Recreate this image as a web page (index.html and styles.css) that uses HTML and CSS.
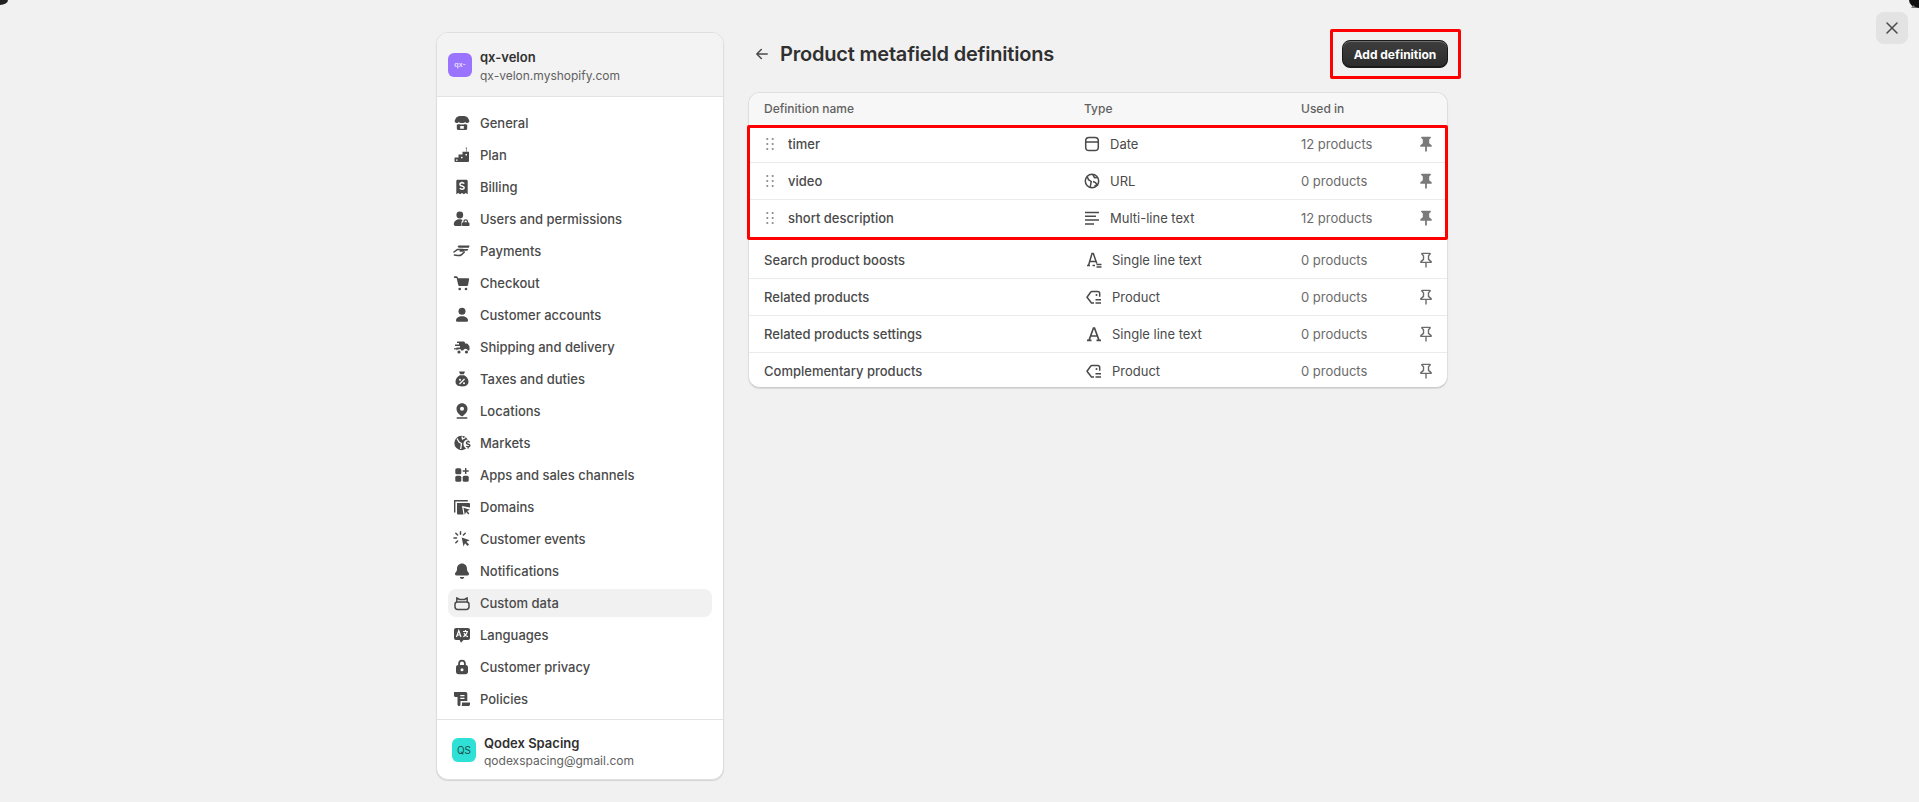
FILE: index.html
```html
<!DOCTYPE html>
<html lang="en">
<head>
    <meta charset="UTF-8">
    <meta name="viewport" content="width=device-width, initial-scale=1.0">
    <title>Product metafield definitions</title>
    <link rel="stylesheet" href="styles.css">
</head>
<body>

<svg class="icon-sprite" xmlns="http://www.w3.org/2000/svg">
    <symbol id="i-store" viewBox="0 0 20 20"><path d="M10 3c3.500 0 5.300.6 6.200 2.300l1.100 2.500c.3 1.300-.8 2.200-2 2.200-1 0-1.600-.4-2-1-.7.6-1.800 1-3.300 1s-2.600-.4-3.300-1c-.4.6-1 1-2 1-1.200 0-2.300-.9-2-2.200l1.100-2.500C4.700 3.600 6.500 3 10 3Z"/><path fill-rule="evenodd" d="M4.800 11.500c.8 0 1.500-.2 2.100-.6.800.4 1.900.6 3.100.6s2.300-.2 3.100-.6c.6.400 1.300.6 2.100.6v4c0 .9-.7 1.500-1.500 1.500H6.300c-.8 0-1.500-.6-1.500-1.500v-4Zm3.400 1.500v2.800h3.600V13H8.200Z"/></symbol>
    <symbol id="i-plan" viewBox="0 0 20 20"><path fill-rule="evenodd" d="M3 12.500h3.500V9.500h4V6.800h6.500V16a1 1 0 0 1-1 1H3.500a1 1 0 0 1-1-1v-2.800c0-.4.200-.7.500-.7Zm1 2v1.300h1.500v-1.300H4Zm5-2.800v1.500h1.500v-1.500H9Zm4.500-2.700v1.500H15V9h-1.500Z"/><path d="M13.500 3.400 14.300 2l.7 1.400h-.5v3.400h-.5V3.400Z"/></symbol>
    <symbol id="i-billing" viewBox="0 0 20 20"><path fill-rule="evenodd" d="M5.600 2.800h8.800c.7 0 1.300.6 1.300 1.300v13.100l-2-1.200-1.800 1.200-1.900-1.200-1.900 1.200-1.800-1.200-2 1.200V4.100c0-.7.600-1.300 1.300-1.300Z"/><path fill="none" stroke="#fff" stroke-width="1.400" d="M12.200 6.700c-.4-.6-1.200-.9-2.200-.9-1.200 0-2.100.6-2.100 1.600 0 2.200 4.300 1 4.300 3.200 0 1-1 1.600-2.200 1.600-1 0-1.800-.4-2.200-1M10 4.700v1.100m0 6.100V13"/></symbol>
    <symbol id="i-users" viewBox="0 0 20 20"><circle cx="7.800" cy="6" r="3.400"/><path d="M1.800 15.300c0-3 2.600-5 6-5 1.100 0 2.100.2 3 .6-.8.7-1.300 1.700-1.300 2.800v3.300H3.500c-1 0-1.700-.7-1.700-1.700Z"/><path fill-rule="evenodd" d="M11.300 13.200v-.6a2.400 2.400 0 0 1 4.800 0v.6c.9.100 1.400.7 1.400 1.500v1.300c0 .8-.6 1-1.300 1h-5c-.7 0-1.300-.2-1.300-1v-1.300c0-.8.500-1.400 1.400-1.500Zm1.300 0h2.200v-.6a1.100 1.100 0 0 0-2.200 0v.6Z"/></symbol>
    <symbol id="i-payments" viewBox="0 0 20 20"><path d="M5.500 5.300c.3-.6.900-.9 1.500-.9h10c.4 0 .7.600.4 1l-.6 1.300H6.700L5.500 5.300Z"/><path d="M8.300 8h8l-.8 1.800H9.700Z"/><path fill="none" stroke="currentColor" stroke-width="1.500" stroke-linecap="round" stroke-linejoin="round" d="M2 11l3.200-2.400h5.500c.8 0 1 1.400 0 1.500H8.200M2.400 14l3.200.5c1.700.3 3 0 4-.9l2.800-2.600"/></symbol>
    <symbol id="i-cart" viewBox="0 0 20 20"><path d="M2.700 3.200h1.400c.9 0 1.600.6 1.800 1.400l.1.600h10.300c.5 0 .9.500.8 1l-1 5.500c-.1.800-.8 1.300-1.600 1.300H7.800c-.8 0-1.500-.5-1.600-1.300L4.600 5H2.700a.9.900 0 0 1 0-1.800Z"/><circle cx="7.700" cy="16" r="1.300"/><circle cx="14" cy="16" r="1.300"/></symbol>
    <symbol id="i-user" viewBox="0 0 20 20"><circle cx="10" cy="6.200" r="3.500"/><path d="M4 15.400c0-2.500 2.500-4.200 6-4.200s6 1.700 6 4.200c0 .9-.7 1.400-1.500 1.400h-9c-.8 0-1.500-.5-1.500-1.400Z"/></symbol>
    <symbol id="i-truck" viewBox="0 0 20 20"><path d="M6 4.500h5.500c.8 0 1.500.7 1.500 1.500v.5h1.700c.5 0 1 .2 1.300.7l1.300 2c.2.200.2.500.2.800v2.500c0 .6-.4 1-1 1h-.6a2.500 2.500 0 0 0-4.800 0H9.400a2.500 2.500 0 0 0-4.800 0H4.500v-3H8V9H3V7.500h4V6H4.800c.1-.9.500-1.500 1.200-1.500Z"/><path d="M2 11.200h5.500v1.200H2z"/><circle cx="7" cy="15" r="1.600"/><circle cx="14.500" cy="15" r="1.600"/></symbol>
    <symbol id="i-tax" viewBox="0 0 20 20"><path d="M7 2.500h6l-1.200 2.800H8.200Z"/><path d="M7.800 6.200h4.400c2.600 1.400 4.300 3.900 4.300 6.600 0 3-2.500 4.700-6.500 4.700s-6.500-1.700-6.500-4.700c0-2.700 1.700-5.200 4.300-6.600Z"/><path fill="none" stroke="#fff" stroke-width="1.300" d="M12.500 10 7.500 15"/><circle cx="8" cy="10.700" r="1" fill="#fff"/><circle cx="12" cy="14.300" r="1" fill="#fff"/></symbol>
    <symbol id="i-pin" viewBox="0 0 20 20"><path fill-rule="evenodd" d="M10 2.300c3.100 0 5.500 2.400 5.500 5.500 0 3.500-2.900 6-4.700 7.200-.5.300-1.100.3-1.600 0-1.800-1.200-4.700-3.700-4.700-7.200 0-3.100 2.400-5.500 5.500-5.500Zm0 3.500a2 2 0 1 0 0 4 2 2 0 0 0 0-4Z"/><rect x="4.500" y="16.300" width="11" height="1.500" rx=".7"/></symbol>
    <symbol id="i-market" viewBox="0 0 20 20"><circle cx="9.500" cy="10" r="7.200"/><circle cx="16" cy="11" r="4.600" fill="#fff"/><path fill="none" stroke="#fff" stroke-width="1.300" d="M5 5.500 7 9l2.500 1.500-.8 5.500M13.500 4.500l-3 1.500-.5-2.500"/><path fill="none" stroke="currentColor" stroke-width="1.400" d="M17.800 9.400c-.3-.5-.9-.8-1.700-.8-1 0-1.700.5-1.700 1.300 0 1.800 3.500.8 3.500 2.600 0 .8-.8 1.300-1.800 1.300-.8 0-1.500-.3-1.800-.8M16.100 7.500v1.100m0 5.700v1.200"/></symbol>
    <symbol id="i-apps" viewBox="0 0 20 20"><rect x="3.300" y="3.300" width="6" height="6" rx="1.500"/><rect x="3.300" y="10.700" width="6" height="6" rx="1.500"/><rect x="10.700" y="10.700" width="6" height="6" rx="1.500"/><path d="M13 3h1.400v2.300h2.300v1.400h-2.300V9H13V6.700h-2.300V5.300H13Z"/></symbol>
    <symbol id="i-domain" viewBox="0 0 20 20"><path d="M2 3h13.800v1.400H3.400v11H2Z"/><path d="M5 6h12a1 1 0 0 1 1 1v3.500l-8-1.500 1.500 8.500H6a1 1 0 0 1-1-1Z"/><path d="m11.500 10.800 6.500 2-2.700 1.300 2 2.300-1 1-2.200-2.300-1.300 2.700Z"/></symbol>
    <symbol id="i-events" viewBox="0 0 20 20"><path d="m9.700 8.500 8 2.700-3.300 1.600 2.600 2.700-1.400 1.400-2.600-2.700-1.500 3.300Z"/><path fill="none" stroke="currentColor" stroke-width="1.500" stroke-linecap="round" d="M8.500 2.700v2.500M3.800 4.200l1.800 1.800M13.200 4.200 11.400 6M2 9h2.500M3.800 13.800l1.800-1.800"/></symbol>
    <symbol id="i-bell" viewBox="0 0 20 20"><path d="M10 2.500c3 0 5 2.300 5 5.200 0 1.700.4 2.800 1.600 4 .9.900.4 2.800-1.300 2.800H4.700c-1.700 0-2.200-1.900-1.300-2.800 1.200-1.200 1.600-2.300 1.600-4 0-2.900 2-5.200 5-5.200Z"/><path d="M7.700 16h4.600c-.3 1.200-1.200 2-2.300 2s-2-.8-2.300-2Z"/></symbol>
    <symbol id="i-data" viewBox="0 0 20 20"><path fill="none" stroke="currentColor" stroke-width="1.500" stroke-linejoin="round" d="M4.800 9V4.800l2.600 1.700h5.200l2.600-1.700V9M5.300 9h9.400c1.300 0 2.300 1 2.300 2.300v2.400c0 1.500-1.200 2.700-2.700 2.700H5.700C4.200 16.400 3 15.200 3 13.700v-2.400C3 10 4 9 5.300 9Z"/></symbol>
    <symbol id="i-lang" viewBox="0 0 20 20"><path d="M4 3h12c1.100 0 2 .9 2 2v8c0 1.100-.9 2-2 2h-4.500L9 17.700 7.600 15H4c-1.100 0-2-.9-2-2V5c0-1.100.9-2 2-2Z"/><path fill="none" stroke="#fff" stroke-width="1.200" d="m4.500 12 2.300-6.500L9 12M5.300 10h3M11 6.500h5M13.500 5v1.500M15.300 6.500c-.5 2.500-2 4.300-4 5.300M12 8c.6 1.600 2 3.200 4 3.800"/></symbol>
    <symbol id="i-lock" viewBox="0 0 20 20"><path fill-rule="evenodd" d="M6.200 8V6.500a3.800 3.800 0 0 1 7.600 0V8c1.500.2 2.200 1.200 2.200 2.500v4.300c0 1.500-1 2.500-2.500 2.500h-7c-1.500 0-2.500-1-2.500-2.500v-4.300c0-1.300.7-2.300 2.200-2.500Zm1.800-.1h4V6.500a2 2 0 0 0-4 0v1.400Zm2 3.300a1.500 1.500 0 1 0 0 3 1.500 1.500 0 0 0 0-3Z"/></symbol>
    <symbol id="i-policy" viewBox="0 0 20 20"><path fill-rule="evenodd" d="M2 3h11.500c1.100 0 1.800.7 1.800 1.800V12H8.500v3.500c0 .8-.5 1.500-1.500 1.500s-1.500-.7-1.500-1.500V8H3.200C2.500 8 2 7.500 2 6.800V3Zm6.300 3v1.300h4.200V6H8.300Zm0 2.800V10h4.200V8.800H8.300Z"/><path d="M10 13.500h8v1.700c0 1-.7 1.800-1.800 1.800H9.500c.3-.5.500-1 .5-1.500v-2Z"/></symbol>
    <symbol id="i-back" viewBox="0 0 20 20"><path fill="none" stroke="currentColor" stroke-width="1.500" stroke-linecap="round" stroke-linejoin="round" d="M15.200 10H4.800M9.300 5.500 4.800 10l4.500 4.500"/></symbol>
    <symbol id="i-close" viewBox="0 0 20 20"><path fill="none" stroke="currentColor" stroke-width="1.500" stroke-linecap="round" d="m5 5 10 10M15 5 5 15"/></symbol>
    <symbol id="i-drag" viewBox="0 0 20 20"><circle cx="7.300" cy="5" r="1.100"/><circle cx="12.700" cy="5" r="1.100"/><circle cx="7.300" cy="10" r="1.100"/><circle cx="12.700" cy="10" r="1.100"/><circle cx="7.300" cy="15" r="1.100"/><circle cx="12.700" cy="15" r="1.100"/></symbol>
    <symbol id="i-date" viewBox="0 0 20 20"><path fill="none" stroke="currentColor" stroke-width="1.500" d="M7 3.500h6c2 0 3.300 1.300 3.300 3.300v6.400c0 2-1.300 3.300-3.300 3.300H7c-2 0-3.300-1.300-3.300-3.300V6.800c0-2 1.300-3.300 3.300-3.300ZM3.700 8h12.600"/></symbol>
    <symbol id="i-globe" viewBox="0 0 20 20"><g fill="none" stroke="currentColor" stroke-width="1.500"><circle cx="10" cy="10" r="6.700"/><path d="m5.200 5.500 1.300 3.200 2.700 1.800-1 5.800M15.800 6.500l-3.300.2-1.700-3M11 10.500l2.500 1 1.800 2.800-2.800.5"/></g></symbol>
    <symbol id="i-lines" viewBox="0 0 20 20"><path fill="none" stroke="currentColor" stroke-width="1.500" d="M3 4.500h14M3 8.300h11M3 12.100h14M3 15.900h9"/></symbol>
    <symbol id="i-text-lines" viewBox="0 0 20 20"><path fill="none" stroke="currentColor" stroke-width="1.500" d="M3 15.500h3M8.500 15.500H11M4.500 15.500 8 3.500h1.300l3.500 10M5.700 11.500h6M12.500 14.500h5M12.500 17h5"/></symbol>
    <symbol id="i-text" viewBox="0 0 20 20"><path fill="none" stroke="currentColor" stroke-width="1.700" d="M3 16.300h4.500M12.500 16.300H17M5 16.300 9.500 4h1L15 16.300M6.500 12h7"/></symbol>
    <symbol id="i-ref" viewBox="0 0 20 20"><g fill="none" stroke="currentColor" stroke-width="1.500" stroke-linejoin="round"><path d="M10 16H7.500L3 10.200l3.800-5.200c.3-.4.700-.6 1.200-.6h5.500c1.200 0 2.200.9 2.200 2.100v3.300"/><path d="M11.500 12.800H17M11.500 16H17"/></g><circle cx="12.500" cy="8" r="1"/></symbol>
    <symbol id="i-pin-on" viewBox="0 0 20 20"><path d="M5.800 2.700h8.400c.7 0 1 .9.500 1.400L13.200 5.600v3.600l2.400 2c.5.500.4 1.500-.5 1.500h-4.200v4l-.9 1.600-.9-1.600v-4H4.900c-.9 0-1-1-.5-1.500l2.400-2V5.600L5.300 4.100c-.5-.5-.2-1.400.5-1.400Z"/></symbol>
    <symbol id="i-pin-off" viewBox="0 0 20 20"><path fill="none" stroke="currentColor" stroke-width="1.400" stroke-linejoin="round" d="M6.200 3.400h7.600c.4 0 .6.400.3.700L12.500 5.700v3.700l2.600 2.200c.3.400.1.800-.3.800H5.200c-.4 0-.6-.4-.3-.8l2.600-2.200V5.700L5.900 4.100c-.3-.3-.1-.7.300-.7ZM10 12.500v5"/></symbol>
</svg>

<div class="corner corner-left"></div>
<div class="corner corner-right"></div>
<div class="corner-mark"></div>

<button class="close-btn" aria-label="Close">
    <svg class="icon"><use href="#i-close"/></svg>
</button>

<div class="layout">
    <!-- Sidebar -->
    <aside class="sidebar">
        <div class="store">
            <span class="avatar avatar-store">qx-</span>
            <div class="who">
                <div class="who-name">qx-velon</div>
                <div class="who-mail">qx-velon.myshopify.com</div>
            </div>
        </div>
        <nav class="nav">
            <a class="nav-item"><svg class="icon"><use href="#i-store"/></svg>General</a>
            <a class="nav-item"><svg class="icon"><use href="#i-plan"/></svg>Plan</a>
            <a class="nav-item"><svg class="icon"><use href="#i-billing"/></svg>Billing</a>
            <a class="nav-item"><svg class="icon"><use href="#i-users"/></svg>Users and permissions</a>
            <a class="nav-item"><svg class="icon"><use href="#i-payments"/></svg>Payments</a>
            <a class="nav-item"><svg class="icon"><use href="#i-cart"/></svg>Checkout</a>
            <a class="nav-item"><svg class="icon"><use href="#i-user"/></svg>Customer accounts</a>
            <a class="nav-item"><svg class="icon"><use href="#i-truck"/></svg>Shipping and delivery</a>
            <a class="nav-item"><svg class="icon"><use href="#i-tax"/></svg>Taxes and duties</a>
            <a class="nav-item"><svg class="icon"><use href="#i-pin"/></svg>Locations</a>
            <a class="nav-item"><svg class="icon"><use href="#i-market"/></svg>Markets</a>
            <a class="nav-item"><svg class="icon"><use href="#i-apps"/></svg>Apps and sales channels</a>
            <a class="nav-item"><svg class="icon"><use href="#i-domain"/></svg>Domains</a>
            <a class="nav-item"><svg class="icon"><use href="#i-events"/></svg>Customer events</a>
            <a class="nav-item"><svg class="icon"><use href="#i-bell"/></svg>Notifications</a>
            <a class="nav-item active"><svg class="icon"><use href="#i-data"/></svg>Custom data</a>
            <a class="nav-item"><svg class="icon"><use href="#i-lang"/></svg>Languages</a>
            <a class="nav-item"><svg class="icon"><use href="#i-lock"/></svg>Customer privacy</a>
            <a class="nav-item"><svg class="icon"><use href="#i-policy"/></svg>Policies</a>
        </nav>
        <div class="account">
            <span class="avatar avatar-user">QS</span>
            <div class="who">
                <div class="who-name">Qodex Spacing</div>
                <div class="who-mail">qodexspacing@gmail.com</div>
            </div>
        </div>
    </aside>

    <!-- Main content -->
    <main class="main">
        <div class="page-head">
            <svg class="icon back"><use href="#i-back"/></svg>
            <h1>Product metafield definitions</h1>
            <div class="add-mark">
                <button class="add-btn">Add definition</button>
            </div>
        </div>

        <div class="card">
            <div class="row row-head">
                <div>Definition name</div>
                <div>Type</div>
                <div>Used in</div>
            </div>

            <div class="marked">
                <div class="row">
                    <div class="name"><svg class="icon drag"><use href="#i-drag"/></svg>timer</div>
                    <div class="type"><svg class="icon"><use href="#i-date"/></svg>Date</div>
                    <div class="used">12 products</div>
                    <svg class="icon pin on"><use href="#i-pin-on"/></svg>
                </div>
                <div class="row">
                    <div class="name"><svg class="icon drag"><use href="#i-drag"/></svg>video</div>
                    <div class="type"><svg class="icon"><use href="#i-globe"/></svg>URL</div>
                    <div class="used">0 products</div>
                    <svg class="icon pin on"><use href="#i-pin-on"/></svg>
                </div>
                <div class="row">
                    <div class="name"><svg class="icon drag"><use href="#i-drag"/></svg>short description</div>
                    <div class="type"><svg class="icon"><use href="#i-lines"/></svg>Multi-line text</div>
                    <div class="used">12 products</div>
                    <svg class="icon pin on"><use href="#i-pin-on"/></svg>
                </div>
            </div>

            <div class="row">
                <div class="name">Search product boosts</div>
                <div class="type"><svg class="icon"><use href="#i-text-lines"/></svg>Single line text</div>
                <div class="used">0 products</div>
                <svg class="icon pin"><use href="#i-pin-off"/></svg>
            </div>
            <div class="row">
                <div class="name">Related products</div>
                <div class="type"><svg class="icon"><use href="#i-ref"/></svg>Product</div>
                <div class="used">0 products</div>
                <svg class="icon pin"><use href="#i-pin-off"/></svg>
            </div>
            <div class="row">
                <div class="name">Related products settings</div>
                <div class="type"><svg class="icon"><use href="#i-text"/></svg>Single line text</div>
                <div class="used">0 products</div>
                <svg class="icon pin"><use href="#i-pin-off"/></svg>
            </div>
            <div class="row">
                <div class="name">Complementary products</div>
                <div class="type"><svg class="icon"><use href="#i-ref"/></svg>Product</div>
                <div class="used">0 products</div>
                <svg class="icon pin"><use href="#i-pin-off"/></svg>
            </div>
        </div>
    </main>
</div>

</body>
</html>
```

FILE: styles.css
```css
html, body {
    margin: 0;
    height: 100%;
}
body {
    background-color: #f1f1f1;
    color: #303030;
    font-family: Inter, "Liberation Sans", sans-serif;
    font-size: 13px;
    line-height: 20px;
    overflow: hidden;
    position: relative;
}
.icon-sprite {
    display: none;
}
.icon {
    width: 20px;
    height: 20px;
    flex: none;
    fill: currentColor;
}

/* Window corners and close button */
.corner {
    position: absolute;
    top: 0;
    background-color: #222;
}
.corner-left {
    left: 0;
    width: 8px;
    height: 5px;
    border-bottom-right-radius: 100%;
}
.corner-right {
    right: 0;
    width: 10px;
    height: 8px;
    background-color: #111;
    border-bottom-left-radius: 100%;
}
.corner-mark {
    position: absolute;
    top: 5px;
    right: 3px;
    width: 5px;
    height: 3px;
    background-color: #777;
    clip-path: polygon(50% 0, 100% 100%, 0 100%);
}
.close-btn {
    position: absolute;
    top: 12px;
    right: 11px;
    width: 32px;
    height: 32px;
    display: flex;
    align-items: center;
    justify-content: center;
    padding: 0;
    border: none;
    border-radius: 8px;
    background-color: #e3e3e3;
    color: #4a4a4a;
}

.layout {
    display: flex;
    align-items: flex-start;
    gap: 24px;
    padding: 32px 0 0 436px;
}

/* Sidebar */
.sidebar {
    width: 288px;
    height: 748px;
    box-sizing: border-box;
    display: flex;
    flex-direction: column;
    background-color: #fff;
    border: 1px solid #dedede;
    border-radius: 12px;
    box-shadow: 0 1px 1px rgba(0, 0, 0, 0.12);
    overflow: hidden;
}
.store {
    height: 63px;
    flex: none;
    display: flex;
    align-items: center;
    gap: 8px;
    padding: 0 11px;
    background-color: #f3f3f3;
    border-bottom: 1px solid #e3e3e3;
}
.store .who {
    padding-top: 3px;
}
.avatar {
    width: 24px;
    height: 24px;
    flex: none;
    display: flex;
    align-items: center;
    justify-content: center;
    border-radius: 6px;
}
.avatar-store {
    background-color: #9a73ff;
    color: #e9e0ff;
    font-size: 7px;
    font-weight: 600;
}
.avatar-user {
    background-color: #2ee0d5;
    color: #1c4f4b;
    font-size: 10px;
}
.who-name {
    font-weight: 600;
    line-height: 18px;
}
.who-mail {
    font-size: 12px;
    line-height: 18px;
    margin-top: 1px;
    color: #616161;
}
.nav {
    flex: 1;
    display: flex;
    flex-direction: column;
    padding: 12px 11px 0;
}
.nav-item {
    height: 28px;
    margin-bottom: 4px;
    flex: none;
    display: flex;
    align-items: center;
    gap: 8px;
    padding-left: 4px;
    border-radius: 8px;
    color: #4a4a4a;
    font-weight: 500;
}
.nav-item.active {
    background-color: #f1f1f1;
}
.account {
    height: 58px;
    flex: none;
    display: flex;
    align-items: center;
    gap: 8px;
    padding: 1px 15px 0;
    border-top: 1px solid #e3e3e3;
}
.account .who {
    padding-top: 4px;
}
.account .who-name,
.account .who-mail {
    line-height: 17px;
    margin: 0;
}

/* Main */
.main {
    width: 700px;
}
.page-head {
    height: 44px;
    display: flex;
    align-items: center;
    margin-bottom: 16px;
}
.back {
    margin: 0 8px 0 4px;
    color: #4a4a4a;
}
h1 {
    margin: 0;
    flex: 1;
    font-size: 20px;
    font-weight: 600;
    line-height: 24px;
    letter-spacing: -0.2px;
    color: #303030;
}
.add-mark {
    position: relative;
}
.add-mark::after {
    content: "";
    position: absolute;
    inset: -11px -13px -11px -12px;
    border: 3px solid #ff0000;
    border-radius: 2px;
}
.add-btn {
    width: 106px;
    height: 28px;
    display: block;
    padding: 0;
    border: 1px solid #1a1a1a;
    border-radius: 8px;
    background: linear-gradient(#3e3e3e, #2c2c2c);
    box-shadow: inset 0 1px 0 rgba(255, 255, 255, 0.25), inset 0 -1px 0 rgba(0, 0, 0, 0.4);
    color: #fff;
    font-family: inherit;
    font-size: 12px;
    font-weight: 700;
}

.card {
    background-color: #fff;
    border: 1px solid #dedede;
    border-bottom-color: #ccc;
    border-radius: 12px;
    box-shadow: 0 1px 1px rgba(0, 0, 0, 0.1);
    box-sizing: border-box;
    width: 700px;
}
.row {
    height: 37px;
    box-sizing: border-box;
    display: grid;
    grid-template-columns: 320px 217px 1fr 20px;
    align-items: center;
    padding: 0 11px 0 15px;
    border-top: 1px solid #ebebeb;
    color: #4a4a4a;
    font-weight: 500;
}
.card > .row:last-child {
    height: 35px;
    padding-top: 8px;
    align-items: start;
}
.row-head {
    height: 32px;
    border-top: none;
    background-color: #f7f7f7;
    border-radius: 12px 12px 0 0;
    color: #616161;
    font-size: 12px;
}
.name {
    display: flex;
    align-items: center;
}
.drag {
    margin: 0 8px 0 -4px;
    color: #8a8a8a;
}
.type {
    display: flex;
    align-items: center;
    gap: 8px;
    font-weight: 400;
}
.used {
    color: #6b6b6b;
    font-weight: 400;
}
.pin {
    color: #6b6b6b;
}
.pin.on {
    color: #7a7a7a;
}

/* Marked rows, red frame lies over the card */
.marked {
    position: relative;
    margin-bottom: 5px;
}
.marked::after {
    content: "";
    position: absolute;
    inset: 0 -1px -4px -2px;
    border: 3px solid #ff0000;
    border-radius: 2px;
    pointer-events: none;
}
.marked .row {
    grid-template-columns: 318px 219px 1fr 20px;
}
.marked .row:first-child {
    border-top: none;
}
.marked + .row {
    border-top: none;
}
```
